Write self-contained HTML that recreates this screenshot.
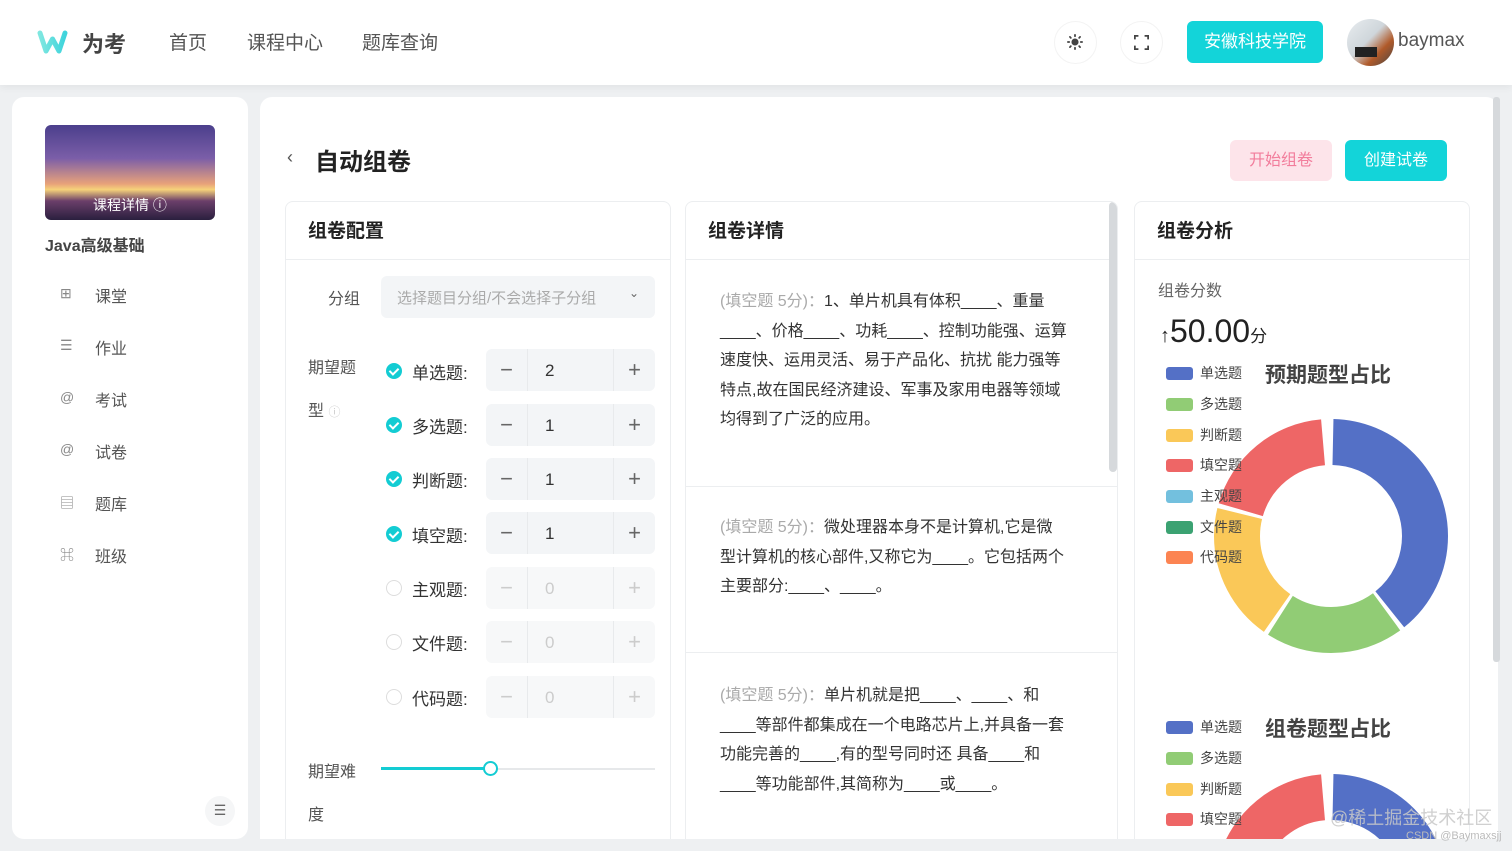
<!DOCTYPE html>
<html><head><meta charset="utf-8"><style>
*{margin:0;padding:0;box-sizing:border-box}
html,body{width:1512px;height:851px;overflow:hidden}
body{background:#eef0f2;font-family:"Liberation Sans","Noto Sans CJK SC",sans-serif;color:#333;position:relative}
.a{position:absolute;white-space:nowrap}
.hdr{position:absolute;left:0;top:0;width:1512px;height:85px;background:#fff;box-shadow:0 2px 8px rgba(0,0,0,.06)}
.nav{font-size:19px;color:#555;top:28px}
.card{position:absolute;background:#fff;border-radius:12px}
.pn{position:absolute;top:201px;height:638px;border:1px solid #eceef0;border-bottom:none;border-radius:8px 8px 0 0;background:#fff;overflow:hidden}
.ph{height:58px;border-bottom:1px solid #eceef0;font-size:19px;font-weight:bold;padding:14px 0 0 22px;color:#222}
.lbl{font-size:16px;color:#555}
.num{position:absolute;left:486px;width:169px;height:42px;background:#f3f5f7;border-radius:6px;font-size:17px;color:#333}
.num .m{position:absolute;left:0;top:0;width:42px;height:42px;text-align:center;line-height:42px;font-size:22px;color:#666;border-right:1px solid #e8eaec}
.num .v{position:absolute;left:59px;top:12px}
.num .p{position:absolute;right:0;top:0;width:42px;height:42px;text-align:center;line-height:42px;font-size:22px;color:#666;border-left:1px solid #e8eaec}
.num.d{background:#f7f8f9;color:#ccc}.num.d .m,.num.d .p{color:#ccc}
.ck{position:absolute;left:386px;width:16px;height:16px;border-radius:50%;background:#13ccd3}
.ck:after{content:"";position:absolute;left:5px;top:3px;width:4px;height:7px;border:solid #fff;border-width:0 2px 2px 0;transform:rotate(45deg)}
.ck.o{background:#fff;border:1.5px solid #ddd}.ck.o:after{display:none}
.rl{position:absolute;left:412px;font-size:17px;color:#333}
.q{position:absolute;left:720px;font-size:16px;line-height:29.6px;color:#333;white-space:nowrap}
.q b{font-weight:normal;color:#aaa}
.lg{position:absolute;left:1166px;width:27px;height:13px;border-radius:3px}
.lt{position:absolute;left:1200px;font-size:14px;color:#444}
.mi{position:absolute;left:95px;font-size:16px;color:#555}
.ic{position:absolute;left:60px;font-size:14px;color:#888}
</style></head><body>
<div class="hdr"></div>
<svg class="a" style="left:37px;top:30px" width="31" height="24" viewBox="0 0 31 24"><defs><linearGradient id="g" x1="0" x2="1"><stop offset="0" stop-color="#7fe7e0"/><stop offset="1" stop-color="#3fd4dc"/></linearGradient></defs><path d="M3 3 L9 21 L15.5 9 L22 21 L28 3" fill="none" stroke="url(#g)" stroke-width="5" stroke-linecap="round" stroke-linejoin="round"/></svg>
<div class="a" style="left:82px;top:27px;font-size:22px;font-weight:bold;color:#444">为考</div>
<div class="a nav" style="left:169px">首页</div>
<div class="a nav" style="left:247px">课程中心</div>
<div class="a nav" style="left:362px">题库查询</div>
<div class="a" style="left:1054px;top:21px;width:43px;height:43px;border-radius:50%;border:1px solid #f3f3f3"></div>
<svg class="a" style="left:1067px;top:34px" width="16" height="16" viewBox="0 0 18 18"><circle cx="9" cy="9" r="4" fill="#444"/><g stroke="#444" stroke-width="2" stroke-linecap="round"><path d="M9 1v1.5M9 15.5V17M1 9h1.5M15.5 9H17M3.3 3.3l1 1M13.7 13.7l1 1M3.3 14.7l1-1M13.7 4.3l1-1"/></g></svg>
<div class="a" style="left:1120px;top:21px;width:43px;height:43px;border-radius:50%;border:1px solid #f3f3f3"></div>
<svg class="a" style="left:1134px;top:35px" width="15" height="15" viewBox="0 0 17 17" fill="none" stroke="#444" stroke-width="2"><path d="M1 5V1h4M12 1h4v4M16 12v4h-4M5 16H1v-4"/></svg>
<div class="a" style="left:1187px;top:21px;width:136px;height:42px;background:#13d4d9;border-radius:6px;color:#fff;font-size:17px;text-align:center;line-height:42px">安徽科技学院</div>
<div class="a" style="left:1347px;top:19px;width:47px;height:47px;border-radius:50%;background:linear-gradient(135deg,#e8ecef 0%,#cfd6db 45%,#b05a2a 70%,#444 100%);overflow:hidden"><div style="position:absolute;left:8px;top:28px;width:22px;height:10px;background:#222"></div></div>
<div class="a" style="left:1398px;top:30px;font-size:19px;color:#555">baymax</div>

<div class="card" style="left:12px;top:97px;width:236px;height:742px"></div>
<div class="a" style="left:45px;top:125px;width:170px;height:95px;border-radius:6px;background:linear-gradient(180deg,#4b3f8c 0%,#7b5ea8 35%,#e8a27a 62%,#f6d27a 68%,#6b3f6a 80%,#2a1f3e 100%)"></div>
<div class="a" style="left:93px;top:195px;font-size:14px;color:#fff">课程详情 ⓘ</div>
<div class="a" style="left:45px;top:232px;font-size:16px;font-weight:bold;color:#444">Java高级基础</div>
<div class="ic" style="top:285px">⊞</div><div class="mi" style="top:283px">课堂</div>
<div class="ic" style="top:337px">☰</div><div class="mi" style="top:335px">作业</div>
<div class="ic" style="top:389px">@</div><div class="mi" style="top:387px">考试</div>
<div class="ic" style="top:441px">@</div><div class="mi" style="top:439px">试卷</div>
<div class="ic" style="top:493px">▤</div><div class="mi" style="top:491px">题库</div>
<div class="ic" style="top:545px">⌘</div><div class="mi" style="top:543px">班级</div>
<div class="a" style="left:205px;top:796px;width:30px;height:30px;border-radius:50%;background:#f5f6f7;text-align:center;line-height:29px;font-size:14px;color:#666">☰</div>

<div class="card" style="left:260px;top:97px;width:1238px;height:742px;border-radius:12px 12px 0 0"></div>
<div class="a" style="left:1493px;top:97px;width:7px;height:565px;background:#d6d9dc;border-radius:3px"></div>
<div class="a" style="left:287px;top:147px;font-size:18px;color:#555">‹</div>
<div class="a" style="left:315px;top:142px;font-size:24px;font-weight:bold;color:#222">自动组卷</div>
<div class="a" style="left:1230px;top:140px;width:102px;height:41px;background:#fde4ea;border-radius:6px;color:#f27d9c;font-size:16px;text-align:center;line-height:41px">开始组卷</div>
<div class="a" style="left:1345px;top:140px;width:102px;height:41px;background:#13d4d9;border-radius:6px;color:#fff;font-size:16px;text-align:center;line-height:41px">创建试卷</div>

<div class="pn" style="left:285px;width:386px"><div class="ph">组卷配置</div></div>
<div class="a lbl" style="left:328px;top:285px">分组</div>
<div class="a" style="left:381px;top:276px;width:274px;height:42px;background:#f3f5f7;border-radius:6px;font-size:15px;color:#aaa;padding:11px 0 0 16px">选择题目分组/不会选择子分组<span style="position:absolute;right:16px;top:10px;color:#666;font-size:12px">⌄</span></div>
<div class="a lbl" style="left:308px;top:354px">期望题</div>
<div class="a lbl" style="left:308px;top:397px">型 <span style="color:#ccc;font-size:12px">ⓘ</span></div>
<div class="ck" style="top:363px"></div><div class="rl" style="top:359px">单选题:</div><div class="num" style="top:349px"><div class="m">−</div><div class="v">2</div><div class="p">+</div></div>
<div class="ck" style="top:417px"></div><div class="rl" style="top:413px">多选题:</div><div class="num" style="top:404px"><div class="m">−</div><div class="v">1</div><div class="p">+</div></div>
<div class="ck" style="top:471px"></div><div class="rl" style="top:467px">判断题:</div><div class="num" style="top:458px"><div class="m">−</div><div class="v">1</div><div class="p">+</div></div>
<div class="ck" style="top:526px"></div><div class="rl" style="top:522px">填空题:</div><div class="num" style="top:512px"><div class="m">−</div><div class="v">1</div><div class="p">+</div></div>
<div class="ck o" style="top:580px"></div><div class="rl" style="top:576px">主观题:</div><div class="num d" style="top:567px"><div class="m">−</div><div class="v">0</div><div class="p">+</div></div>
<div class="ck o" style="top:634px"></div><div class="rl" style="top:630px">文件题:</div><div class="num d" style="top:621px"><div class="m">−</div><div class="v">0</div><div class="p">+</div></div>
<div class="ck o" style="top:689px"></div><div class="rl" style="top:685px">代码题:</div><div class="num d" style="top:676px"><div class="m">−</div><div class="v">0</div><div class="p">+</div></div>
<div class="a lbl" style="left:308px;top:758px">期望难</div>
<div class="a lbl" style="left:308px;top:801px">度</div>
<div class="a" style="left:381px;top:768px;width:274px;height:2px;background:#e6e8ea"></div>
<div class="a" style="left:381px;top:767px;width:110px;height:3px;background:#13ccd3"></div>
<div class="a" style="left:483px;top:761px;width:15px;height:15px;border-radius:50%;border:2.5px solid #13ccd3;background:#fff"></div>

<div class="pn" style="left:685px;width:433px"><div class="ph">组卷详情</div>
<div style="position:absolute;left:0;right:0;top:284px;height:1px;background:#eceef0"></div>
<div style="position:absolute;left:0;right:0;top:450px;height:1px;background:#eceef0"></div>
<div style="position:absolute;left:423px;top:0;width:8px;height:270px;background:#d6d9dc;border-radius:4px"></div></div>
<div class="q" style="top:287px"><b>(填空题 5分)：</b>1、单片机具有体积____、重量<br>____、价格____、功耗____、控制功能强、运算<br>速度快、运用灵活、易于产品化、抗扰 能力强等<br>特点,故在国民经济建设、军事及家用电器等领域<br>均得到了广泛的应用。</div>
<div class="q" style="top:513px"><b>(填空题 5分)：</b>微处理器本身不是计算机,它是微<br>型计算机的核心部件,又称它为____。它包括两个<br>主要部分:____、____。</div>
<div class="q" style="top:681px"><b>(填空题 5分)：</b>单片机就是把____、____、和<br>____等部件都集成在一个电路芯片上,并具备一套<br>功能完善的____,有的型号同时还 具备____和<br>____等功能部件,其简称为____或____。</div>

<div class="pn" style="left:1134px;width:336px"><div class="ph">组卷分析</div>
<svg style="position:absolute;left:-1134px;top:-201px" width="1512" height="851">
<g transform="rotate(-90 1330 535)" fill="none" stroke-width="46">
<circle cx="1330" cy="535" r="94" stroke="#5470c6" stroke-dasharray="229.7 600" stroke-dashoffset="-2"/>
<circle cx="1330" cy="535" r="94" stroke="#91cc75" stroke-dasharray="112.9 600" stroke-dashoffset="-235.7"/>
<circle cx="1330" cy="535" r="94" stroke="#fac858" stroke-dasharray="112.9 600" stroke-dashoffset="-352.6"/>
<circle cx="1330" cy="535" r="94" stroke="#ee6666" stroke-dasharray="112.9 600" stroke-dashoffset="-469.5"/>
</g>
<g transform="rotate(-90 1330 890)" fill="none" stroke-width="46">
<circle cx="1330" cy="890" r="94" stroke="#5470c6" stroke-dasharray="229.7 600" stroke-dashoffset="-2"/>
<circle cx="1330" cy="890" r="94" stroke="#91cc75" stroke-dasharray="112.9 600" stroke-dashoffset="-235.7"/>
<circle cx="1330" cy="890" r="94" stroke="#fac858" stroke-dasharray="112.9 600" stroke-dashoffset="-352.6"/>
<circle cx="1330" cy="890" r="94" stroke="#ee6666" stroke-dasharray="112.9 600" stroke-dashoffset="-469.5"/>
</g></svg></div>
<div class="a" style="left:1158px;top:277px;font-size:16px;color:#666">组卷分数</div>
<div class="a" style="left:1160px;top:313px;font-size:32px;color:#222"><span style="font-size:20px">↑</span>50.00<span style="font-size:17px">分</span></div>
<div class="a" style="left:1265px;top:359px;font-size:21px;font-weight:bold;color:#444">预期题型占比</div>
<div class="lg" style="top:367px;background:#5470c6"></div><div class="lt" style="top:363px">单选题</div>
<div class="lg" style="top:398px;background:#91cc75"></div><div class="lt" style="top:394px">多选题</div>
<div class="lg" style="top:429px;background:#fac858"></div><div class="lt" style="top:425px">判断题</div>
<div class="lg" style="top:459px;background:#ee6666"></div><div class="lt" style="top:455px">填空题</div>
<div class="lg" style="top:490px;background:#73c0de"></div><div class="lt" style="top:486px">主观题</div>
<div class="lg" style="top:521px;background:#3ba272"></div><div class="lt" style="top:517px">文件题</div>
<div class="lg" style="top:551px;background:#fc8452"></div><div class="lt" style="top:547px">代码题</div>
<div class="a" style="left:1265px;top:713px;font-size:21px;font-weight:bold;color:#444">组卷题型占比</div>
<div class="lg" style="top:721px;background:#5470c6"></div><div class="lt" style="top:717px">单选题</div>
<div class="lg" style="top:752px;background:#91cc75"></div><div class="lt" style="top:748px">多选题</div>
<div class="lg" style="top:783px;background:#fac858"></div><div class="lt" style="top:779px">判断题</div>
<div class="lg" style="top:813px;background:#ee6666"></div><div class="lt" style="top:809px">填空题</div>
<div class="a" style="left:1330px;top:804px;font-size:18px;color:rgba(200,200,200,.85)">@稀土掘金技术社区</div>
<div class="a" style="left:1406px;top:830px;font-size:11px;color:#bbb">CSDN @Baymaxsjj</div>
</body></html>
